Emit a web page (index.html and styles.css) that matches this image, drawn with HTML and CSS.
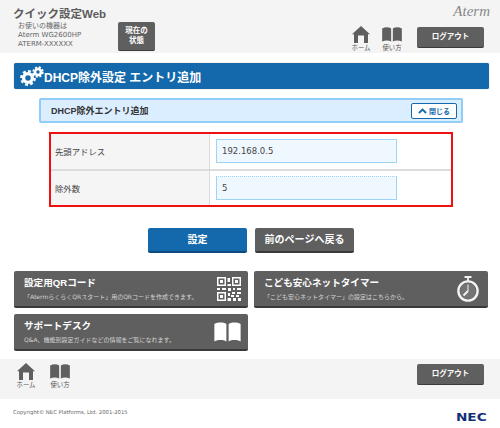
FILE: index.html
```html
<!DOCTYPE html>
<html lang="ja">
<head>
<meta charset="utf-8">
<title>DHCP除外設定 エントリ追加</title>
<link rel="stylesheet" href="styles.css">
</head>
<body>
<svg class="defs" width="0" height="0">
  <symbol id="home" viewBox="0 0 18 17"><path d="M9 0 18 8.2 16 8.2 16 17 12 17 12 9.5 6 9.5 6 17 2 17 2 8.2 0 8.2Z"/></symbol>
  <symbol id="book" viewBox="0 0 21 16"><path d="M0 1.5C3 0 7 0 9.6 1.5V15.5C7 14 3 14 0 15.5ZM11.4 1.5C14 0 18 0 21 1.5V15.5C18 14 14 14 11.4 15.5Z"/></symbol>
</svg>
<header class="top">
  <div class="brand">
    <div class="app-title">クイック設定Web</div>
    <div class="device-row">
      <div class="device">お使いの機器は<br>Aterm WG2600HP<br>ATERM-XXXXXX</div>
      <div class="btn-dark status">現在の<br>状態</div>
    </div>
  </div>
  <div class="top-right">
    <div class="aterm">Aterm</div>
    <nav class="nav">
      <div class="nav-item nav-home"><svg class="i-home"><use href="#home"/></svg><span>ホーム</span></div>
      <div class="nav-item nav-guide"><svg class="i-book"><use href="#book"/></svg><span>使い方</span></div>
      <div class="btn-dark logout">ログアウト</div>
    </nav>
  </div>
</header>
<main class="main">
  <h1 class="page-title">
    <svg class="gears" viewBox="0 0 24 20"><g fill="none" stroke="#fff"><circle cx="8" cy="12" r="4.4" stroke-width="3.4"/><circle cx="8" cy="12" r="6.8" stroke-width="2.2" stroke-dasharray="3 2.3"/><circle cx="18" cy="6" r="3" stroke-width="2.6"/><circle cx="18" cy="6" r="4.8" stroke-width="1.8" stroke-dasharray="2.2 1.6"/></g></svg>
    <span>DHCP除外設定 エントリ追加</span>
  </h1>
  <section class="panel-head">
    <span>DHCP除外エントリ追加</span>
    <div class="close"><svg class="chev" viewBox="0 0 10 6"><path d="M1 5.2 5 1.4 9 5.2" fill="none" stroke="#1469ac" stroke-width="2"/></svg>閉じる</div>
  </section>
  <div class="form">
    <div class="row">
      <div class="label">先頭アドレス</div>
      <div class="cell"><div class="input">192.168.0.5</div></div>
    </div>
    <div class="row">
      <div class="label">除外数</div>
      <div class="cell"><div class="input input-active">5</div></div>
    </div>
  </div>
  <div class="actions">
    <div class="btn-big primary">設定</div>
    <div class="btn-big back">前のページへ戻る</div>
  </div>
  <div class="cards">
    <div class="card">
      <div class="card-text"><div class="card-title">設定用QRコード</div><div class="card-sub">「AtermらくらくQRスタート」用のQRコードを作成できます。</div></div>
      <svg class="qr" viewBox="0 0 24 24"><g fill="#fff"><path d="M0 0H9V9H0ZM1.5 1.5V7.5H7.5V1.5ZM3 3H6V6H3ZM15 0H24V9H15ZM16.5 1.5V7.5H22.5V1.5ZM18 3H21V6H18ZM0 15H9V24H0ZM1.5 16.5V22.5H7.5V16.5ZM3 18H6V21H3ZM10.5 1H13V5H10.5ZM10.5 7H14V9H10.5ZM0 11H3V13H0ZM5 11H9V13H5ZM11 11H14V14H11ZM16 11H18V13H16ZM20 11H24V13H20ZM11 16H13V19H11ZM15 15H18V17H15ZM20 15H24V17H20ZM14 18H17V20H14ZM19 18H22V20H19ZM10.5 21H14V24H10.5ZM16 21H19V24H16ZM21 21H24V24H21Z"/></g></svg>
    </div>
    <div class="card">
      <div class="card-text"><div class="card-title">こども安心ネットタイマー</div><div class="card-sub">「こども安心ネットタイマー」の設定はこちらから。</div></div>
      <svg class="timer" viewBox="0 0 22 26"><circle cx="11" cy="15" r="7.8" fill="#f2f2f2" fill-opacity=".15"/><g fill="none" stroke="#f2f2f2"><circle cx="11" cy="15" r="9.6" stroke-width="2.4"/><path d="M7.5 1H14.5" stroke-width="2"/><path d="M11 1V5" stroke-width="1.8"/><path d="M11 8.5V15" stroke-width="1"/><path d="M11 15 6.5 19.5" stroke-width="2"/></g></svg>
    </div>
    <div class="card">
      <div class="card-text"><div class="card-title">サポートデスク</div><div class="card-sub">Q&amp;A、機能別設定ガイドなどの情報をご覧になれます。</div></div>
      <svg class="i-book-big"><use href="#book"/></svg>
    </div>
  </div>
</main>
<div class="foot-bar">
  <nav class="nav">
    <div class="nav-item nav-home"><svg class="i-home"><use href="#home"/></svg><span>ホーム</span></div>
    <div class="nav-item nav-guide"><svg class="i-book"><use href="#book"/></svg><span>使い方</span></div>
  </nav>
  <div class="btn-dark logout">ログアウト</div>
</div>
<footer class="copy">
  <span class="copy-text">Copyright© NEC Platforms, Ltd. 2001-2015</span>
  <span class="nec">NEC</span>
</footer>
</body>
</html>
```
FILE: styles.css
```css
html, body { margin: 0; padding: 0; }
body { width: 500px; height: 428px; overflow: hidden; background: #fff; color: #444; font-family: "Liberation Sans", "Noto Sans CJK JP", sans-serif; font-size: 9px; position: relative; }
.defs { position: absolute; }
.top { height: 53px; background: #f4f4f4; display: flex; justify-content: space-between; padding: 0 16px 0 13px; box-sizing: border-box; }
.app-title { font-size: 11.5px; font-weight: bold; color: #5c5c5c; line-height: 15px; padding-top: 7px; }
.device-row { display: flex; align-items: flex-start; margin-left: 5px; }
.device { font-family: "DejaVu Sans", "Noto Sans CJK JP", sans-serif; font-size: 7px; line-height: 9px; color: #666; width: 100px; }
.btn-dark { background: #5f5f5f; color: #fff; border-radius: 2px; border-bottom: 1px solid #3a3a3a; box-sizing: border-box; font-size: 7.5px; text-align: center; }
.status { width: 37px; height: 29px; line-height: 10px; padding-top: 4px; font-weight: bold; }
.top-right { display: flex; flex-direction: column; align-items: flex-end; }
.aterm { font-family: "Liberation Serif", serif; font-style: italic; font-size: 15px; line-height: 13px; height: 26px; padding-top: 5px; margin-right: -6px; box-sizing: border-box; color: #888; }
.nav { display: flex; align-items: flex-start; }
.nav-item { display: flex; flex-direction: column; align-items: center; font-size: 6.4px; line-height: 7px; color: #555; width: 20px; }
.nav-item svg { fill: #5f5f5f; display: block; }
.nav-home { margin-right: 11px; }
.nav-guide { margin-right: 15px; }
.i-home { width: 18px; height: 17px; margin-bottom: 1px; }
.i-book { width: 20px; height: 15px; margin: 1px 0 2px; }
.logout { width: 67px; height: 21px; line-height: 20px; margin-top: 1px; font-weight: bold; }
.main { padding: 10px 11px 0 14px; }
.page-title { margin: 0; height: 26px; background: #1469ac; border-radius: 2px; box-shadow: 0 0 1px #777; color: #fff; font-size: 12px; font-weight: bold; display: flex; align-items: center; padding-left: 6px; }
.gears { width: 24px; height: 20px; }
.panel-head { margin: 9px 26px 0 25px; height: 25px; box-sizing: border-box; background: #dbeeff; border: 2px solid #90cdf7; border-radius: 2px; display: flex; align-items: center; justify-content: space-between; padding: 0 4px 0 10px; font-size: 9px; font-weight: bold; color: #333; }
.close { width: 46px; height: 16px; box-sizing: border-box; background: #fff; border: 1px solid #1469ac; border-radius: 2px; color: #1469ac; font-size: 7px; font-weight: bold; display: flex; align-items: center; justify-content: center; gap: 2px; }
.chev { width: 9px; height: 6px; }
.form { margin: 9px 36px 0 35px; height: 75px; box-sizing: border-box; border: 2px solid #f01010; display: flex; flex-direction: column; }
.row { flex: 1; display: flex; }
.row + .row { border-top: 2px solid #dcdcdc; }
.label { width: 159px; box-sizing: border-box; background: #f5f5f5; border-right: 1px solid #dcdcdc; padding-left: 4px; display: flex; align-items: center; font-size: 8.4px; color: #444; }
.cell { flex: 1; display: flex; align-items: center; padding-left: 6px; }
.input { width: 181px; height: 24px; box-sizing: border-box; background: #eff7ff; border: 1px solid #9fd3f7; padding-left: 5px; line-height: 22px; font-family: "DejaVu Sans", sans-serif; font-size: 8.5px; color: #444; }
.input-active { border-top-style: dotted; }
.actions { display: flex; justify-content: center; gap: 8px; margin: 21px 0 0 -1px; }
.btn-big { width: 99px; height: 25px; box-sizing: border-box; border-radius: 2px; color: #fff; font-size: 10px; font-weight: bold; text-align: center; line-height: 23px; }
.primary { background: #1469ac; border-bottom: 2px solid #0c4a80; }
.back { background: #5f5f5f; border-bottom: 2px solid #3a3a3a; }
.cards { display: grid; grid-template-columns: 234px 234px; column-gap: 6px; row-gap: 6px; margin-top: 18px; }
.card { height: 37px; box-sizing: border-box; background: #5f5f5f; border-bottom: 2px solid #3a3a3a; border-radius: 2px; color: #fff; display: flex; justify-content: space-between; align-items: center; padding: 0 7px 0 10px; }
.card-title { font-size: 9.6px; font-weight: bold; line-height: 12px; }
.card-sub { font-family: "DejaVu Sans", "Noto Sans CJK JP", sans-serif; font-size: 6px; line-height: 9px; margin-top: 3px; color: #d4d4d4; }
.qr { width: 24px; height: 24px; }
.timer { width: 22px; height: 26px; margin-right: 2px; }
.i-book-big { width: 27px; height: 20px; fill: #fff; }
.foot-bar { margin-top: 8px; height: 40px; background: #f4f4f4; display: flex; justify-content: space-between; padding: 4px 16px 0 16px; box-sizing: border-box; }
.foot-bar .logout { margin-top: 1px; }
.foot-bar .nav-home { margin-right: 14px; }
.copy { display: flex; justify-content: space-between; align-items: flex-start; padding: 9px 13px 0 13px; }
.copy-text { font-family: "DejaVu Sans", sans-serif; font-size: 5.3px; line-height: 8px; color: #666; }
.nec { font-family: "DejaVu Sans", sans-serif; font-size: 10.5px; line-height: 12px; margin-top: 3px; font-weight: bold; color: #12307a; transform: scaleX(1.3); transform-origin: right center; }
```
